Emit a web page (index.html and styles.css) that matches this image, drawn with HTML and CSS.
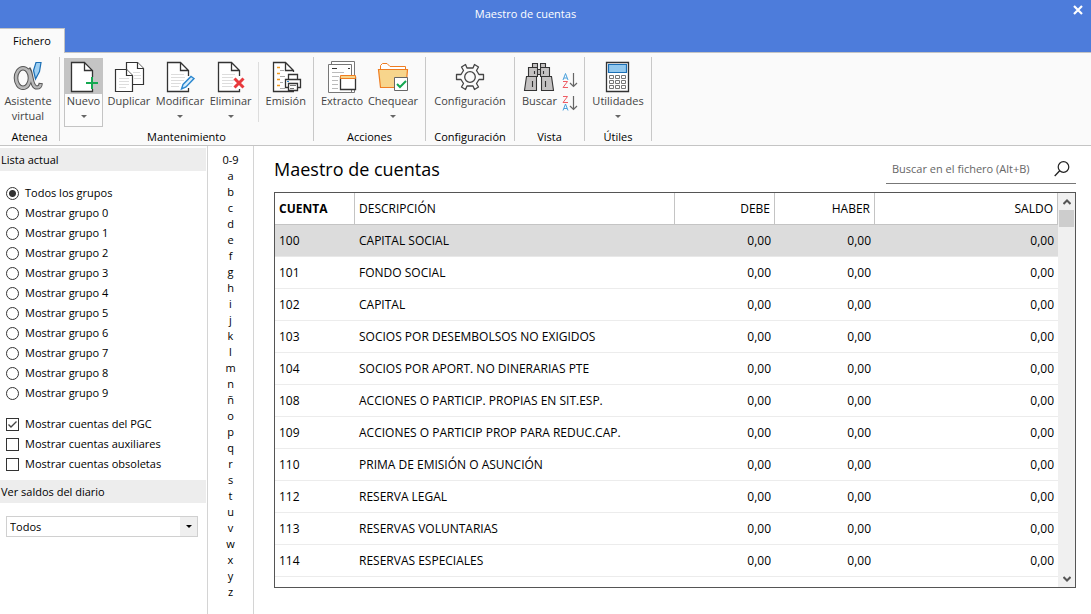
FILE: index.html
```html
<!DOCTYPE html>
<html lang="es">
<head>
<meta charset="utf-8">
<title>Maestro de cuentas</title>
<link rel="stylesheet" href="styles.css">
</head>
<body>
<div class="app">
  <header class="titlebar">
    <span class="window-title">Maestro de cuentas</span>
    <button class="close" type="button" aria-label="Cerrar"><svg width="10" height="10" viewBox="0 0 10 10"><path d="M1 1L9 9M9 1L1 9" stroke="#fff" stroke-width="2.2"/></svg></button>
    <button class="tab" type="button">Fichero</button>
  </header>

  <nav class="ribbon">
    <section class="group g-atenea">
      <div class="tools">
        <button class="tool" type="button">
          <svg class="icon" viewBox="0 0 32 32"><g fill="none" stroke="#555"><ellipse cx="11" cy="17" rx="7" ry="9.800" stroke-width="4.600"/><path d="M16.500 7.500C20.500 12 18.500 26.500 25 26.500C27.500 26.500 28.500 25 28.800 22" stroke-width="4.200"/></g><g fill="none" stroke="#b8b8b8"><ellipse cx="11" cy="17" rx="7" ry="9.800" stroke-width="2.600"/><path d="M16.500 8.500C20.500 12 18.500 26.500 25 26.500C27.500 26.500 28.500 25 28.800 23" stroke-width="2.200"/></g><path d="M24 1.500H29L27.500 10.500L23.500 18L21.500 9.500Z" fill="#9fd0f3" stroke="#1b6fb5" stroke-width="1.200"/></svg>
          <span>Asistente<br>virtual</span>
        </button>
      </div>
      <h2>Atenea</h2>
    </section>

    <section class="group g-mant">
      <div class="tools">
        <button class="tool active" type="button">
          <svg class="icon" viewBox="0 0 32 32"><path d="M3.500 1.500H17.500L24.500 8.500V30.500H3.500Z" fill="#fff"/><path d="M24.500 16V9.500L16.500 1.500H3.500V30.500H24.500V28M16.500 1.500V9.500H24.500" fill="none" stroke="#333" stroke-width="1.300"/><path d="M24 16v12M18 22h12" stroke="#14a850" stroke-width="2"/></svg>
          <span>Nuevo</span><i class="caret"></i>
        </button>
        <button class="tool" type="button">
          <svg class="icon" viewBox="0 0 32 32"><g fill="#fff" stroke="#333" stroke-width="1.200"><path d="M13.500 1.500H24.500L30.500 7.500V23.500H13.500Z"/><path d="M24.500 1.500V7.500H30.500"/><path d="M2.500 8.500H13.500L19.500 14.500V30.500H2.500Z"/><path d="M13.500 8.500V14.500H19.500"/></g><path d="M20 11.500h7M21 14.500h7M21 17.500h7M6 17.500h10M6 20.500h10M6 23.500h10M6 26.500h7" stroke="#ddd"/></svg>
          <span>Duplicar</span>
        </button>
        <button class="tool" type="button">
          <svg class="icon" viewBox="0 0 32 32"><path d="M24.500 15V9.500L16.500 1.500H3.500V30.500H24.500V27M16.500 1.500V9.500H24.500" fill="#fff" stroke="#333" stroke-width="1.300"/><path d="M7 13.500h13M7 16.500h14M7 19.500h13M7 22.500h10M7 25.500h8" stroke="#ddd"/><path d="M17.500 28L19 23.500L27 15.500L30 17.500L22 26Z" fill="#d6ecfb" stroke="#2b87cf" stroke-width="1.400"/></svg>
          <span>Modificar</span><i class="caret"></i>
        </button>
        <button class="tool" type="button">
          <svg class="icon" viewBox="0 0 32 32"><path d="M24.500 15V9.500L16.500 1.500H3.500V30.500H24.500V28M16.500 1.500V9.500H24.500" fill="#fff" stroke="#333" stroke-width="1.300"/><path d="M7 13.500h13M7 16.500h11M7 19.500h12M7 22.500h11M7 25.500h10" stroke="#ddd"/><path d="M19.500 17.500l9 9M28.500 17.500l-9 9" stroke="#e8393c" stroke-width="3"/></svg>
          <span>Eliminar</span><i class="caret"></i>
        </button>
        <span class="divider"></span>
        <button class="tool" type="button">
          <svg class="icon" viewBox="0 0 32 32"><path d="M23.500 11V9.500L15.500 1.500H3.500V30.500H24M15.500 1.500V9.500H23.500" fill="#fff" stroke="#333" stroke-width="1.300"/><path d="M7 6.500h3M7 12.500h3M7 18.500h3M7 24.500h3" stroke="#f39a1e" stroke-width="1.400"/><path d="M10 9.500h4M10 15.500h5M10 21.500h3M10 27.500h5" stroke="#aaa"/><g fill="#fff" stroke="#333" stroke-width="1.300"><path d="M18.500 19V13.500H27.500V19M15.500 26.500V18.500H30.500V26.500Z"/><path d="M18.500 22.500H27.500V29.500H18.500Z"/></g><path d="M20 24.500h6M20 27.500h4" stroke="#777"/><path d="M17 20.500h2" stroke="#2b87cf"/></svg>
          <span>Emisión</span>
        </button>
      </div>
      <h2>Mantenimiento</h2>
    </section>

    <section class="group g-acc">
      <div class="tools">
        <button class="tool" type="button">
          <svg class="icon" viewBox="0 0 32 32"><path d="M5.500 3V.500H28.500V31.500H25M2.500 3.500H25.500V31.500H2.500Z" fill="#fff" stroke="#777"/><path d="M6 7.500h5M22 7.500h2" stroke="#333"/><path d="M6 11.500h12M6 15.500h7M6 19.500h6M6 23.500h6M6 27.500h6" stroke="#bbb"/><path d="M14.500 16.500H29.500V28.500H14.500Z" fill="#fff" stroke="#333" stroke-width="1.300"/><path d="M14.500 14.500H29.500V17.500H14.500Z" fill="#f7d58c" stroke="#ef7d22"/></svg>
          <span>Extracto</span>
        </button>
        <button class="tool" type="button">
          <svg class="icon" viewBox="0 0 32 32"><path d="M3.500 9V4.500L5.500 2.500H10L13 5.500H28.500V9" fill="#fff" stroke="#ef7d22"/><path d="M1.500 8.500H30.500L29 26.500H3.500Z" fill="#f7d58c" stroke="#ef7d22" stroke-width="1.200"/><path d="M17.500 16.500H30.500V29.500H17.500Z" fill="#fff" stroke="#666"/><path d="M20 23l3 3 6-6" fill="none" stroke="#14a850" stroke-width="2"/></svg>
          <span>Chequear</span><i class="caret"></i>
        </button>
      </div>
      <h2>Acciones</h2>
    </section>

    <section class="group g-conf">
      <div class="tools">
        <button class="tool" type="button">
          <svg class="icon" viewBox="0 0 32 32"><g fill="none" stroke="#444" stroke-width="1.300" stroke-linejoin="round"><path d="M13 7L11.500 3.500L7.500 6L9.500 9.500L7 13.500H2.500V18.500H7L9.500 22.500L7.500 26L11.500 28.500L13 25H19L20.500 28.500L24.500 26L22.500 22.500L25 18.500H29.500V13.500H25L22.500 9.500L24.500 6L20.500 3.500L19 7Z"/><circle cx="16" cy="16" r="5.300"/></g></svg>
          <span>Configuración</span>
        </button>
      </div>
      <h2>Configuración</h2>
    </section>

    <section class="group g-vista">
      <div class="tools">
        <button class="tool" type="button">
          <svg class="icon" viewBox="0 0 32 32"><g fill="#c4c2c2" stroke="#333" stroke-width="1.100"><path d="M9.500 2.500H14.500V6.500H9.500ZM17.500 2.500H22.500V6.500H17.500ZM5.500 6.500H14.500V15.500H5.500ZM17.500 6.500H26.500V15.500H17.500ZM14.500 8.500H17.500V13.500H14.500ZM3.500 15.500H13.500V29.500H1.500ZM18.500 15.500H28.500L30.500 29.500H18.500Z"/><path d="M11.500 10v3M20.500 10v3M9.500 20v6M22.500 20v6"/></g></svg>
          <span>Buscar</span>
        </button>
        <div class="sorts">
          <button class="sort" type="button" aria-label="Orden ascendente"><svg width="16" height="18" viewBox="0 0 16 18"><path d="M1 8L3.500 1.500L6 8M2 6H5" fill="none" stroke="#4aa0dc"/><path d="M1 9.500H5.500L1 15.500H6" fill="none" stroke="#ee5b63"/><path d="M11.500 1V14.500M8 11L11.500 14.500L15 11" fill="none" stroke="#666" stroke-width="1.200"/></svg></button>
          <button class="sort" type="button" aria-label="Orden descendente"><svg width="16" height="18" viewBox="0 0 16 18"><path d="M1 1.500H5.500L1 7.500H6" fill="none" stroke="#ee5b63"/><path d="M1 15.500L3.500 9L6 15.500M2 13.500H5" fill="none" stroke="#4aa0dc"/><path d="M11.500 1V14.500M8 11L11.500 14.500L15 11" fill="none" stroke="#666" stroke-width="1.200"/></svg></button>
        </div>
      </div>
      <h2>Vista</h2>
    </section>

    <section class="group g-util">
      <div class="tools">
        <button class="tool" type="button">
          <svg class="icon" viewBox="0 0 32 32"><path d="M4.500 1.500H26.500V30.500H4.500Z" fill="#fff" stroke="#333" stroke-width="1.300"/><path d="M6.500 3.500H24.500V11.500H6.500Z" fill="#92c8ee" stroke="#1b6fb5" stroke-width="1.200"/><path d="M7.500 14.500h4v3h-4zM13.500 14.500h4v3h-4zM19.500 14.500h4v3h-4zM7.500 19.500h4v3h-4zM13.500 19.500h4v3h-4zM19.500 19.500h4v3h-4zM7.500 24.500h4v3h-4zM13.500 24.500h4v3h-4zM19.500 24.500h4v3h-4z" fill="#fff" stroke="#777"/></svg>
          <span>Utilidades</span><i class="caret"></i>
        </button>
      </div>
      <h2>Útiles</h2>
    </section>
  </nav>

  <div class="body">
    <aside class="sidebar">
      <h3>Lista actual</h3>
      <div class="options">
        <label><input type="radio" name="grupo" checked>Todos los grupos</label>
        <label><input type="radio" name="grupo">Mostrar grupo 0</label>
        <label><input type="radio" name="grupo">Mostrar grupo 1</label>
        <label><input type="radio" name="grupo">Mostrar grupo 2</label>
        <label><input type="radio" name="grupo">Mostrar grupo 3</label>
        <label><input type="radio" name="grupo">Mostrar grupo 4</label>
        <label><input type="radio" name="grupo">Mostrar grupo 5</label>
        <label><input type="radio" name="grupo">Mostrar grupo 6</label>
        <label><input type="radio" name="grupo">Mostrar grupo 7</label>
        <label><input type="radio" name="grupo">Mostrar grupo 8</label>
        <label><input type="radio" name="grupo">Mostrar grupo 9</label>
      </div>
      <div class="options checks">
        <label><input type="checkbox" checked>Mostrar cuentas del PGC</label>
        <label><input type="checkbox">Mostrar cuentas auxiliares</label>
        <label><input type="checkbox">Mostrar cuentas obsoletas</label>
      </div>
      <h3 id="saldos">Ver saldos del diario</h3>
      <div class="combo">
        <select aria-labelledby="saldos"><option>Todos</option></select>
        <span class="combo-arrow"></span>
      </div>
    </aside>

    <nav class="letters">
      <a href="#">0-9</a><a href="#">a</a><a href="#">b</a><a href="#">c</a><a href="#">d</a><a href="#">e</a><a href="#">f</a><a href="#">g</a><a href="#">h</a><a href="#">i</a><a href="#">j</a><a href="#">k</a><a href="#">l</a><a href="#">m</a><a href="#">n</a><a href="#">ñ</a><a href="#">o</a><a href="#">p</a><a href="#">q</a><a href="#">r</a><a href="#">s</a><a href="#">t</a><a href="#">u</a><a href="#">v</a><a href="#">w</a><a href="#">x</a><a href="#">y</a><a href="#">z</a>
    </nav>

    <main class="main">
      <div class="main-head">
        <h1>Maestro de cuentas</h1>
        <div class="search">
          <input type="text" placeholder="Buscar en el fichero (Alt+B)" aria-label="Buscar en el fichero">
          <button type="button" aria-label="Buscar"><svg width="16" height="16" viewBox="0 0 16 16"><circle cx="9.500" cy="6" r="5.300" fill="none" stroke="#222" stroke-width="1.200"/><path d="M5.700 9.800L.7 15" stroke="#222" stroke-width="1.300"/></svg></button>
        </div>
      </div>
      <div class="grid">
        <div class="grid-view">
          <table>
            <colgroup><col class="c-cuenta"><col class="c-desc"><col class="c-num"><col class="c-num"><col></colgroup>
            <thead><tr><th class="sorted">CUENTA</th><th>DESCRIPCIÓN</th><th class="num">DEBE</th><th class="num">HABER</th><th class="num">SALDO</th></tr></thead>
            <tbody>
              <tr class="selected"><td>100</td><td>CAPITAL SOCIAL</td><td class="num">0,00</td><td class="num">0,00</td><td class="num">0,00</td></tr>
              <tr><td>101</td><td>FONDO SOCIAL</td><td class="num">0,00</td><td class="num">0,00</td><td class="num">0,00</td></tr>
              <tr><td>102</td><td>CAPITAL</td><td class="num">0,00</td><td class="num">0,00</td><td class="num">0,00</td></tr>
              <tr><td>103</td><td>SOCIOS POR DESEMBOLSOS NO EXIGIDOS</td><td class="num">0,00</td><td class="num">0,00</td><td class="num">0,00</td></tr>
              <tr><td>104</td><td>SOCIOS POR APORT. NO DINERARIAS PTE</td><td class="num">0,00</td><td class="num">0,00</td><td class="num">0,00</td></tr>
              <tr><td>108</td><td>ACCIONES O PARTICIP. PROPIAS EN SIT.ESP.</td><td class="num">0,00</td><td class="num">0,00</td><td class="num">0,00</td></tr>
              <tr><td>109</td><td>ACCIONES O PARTICIP PROP PARA REDUC.CAP.</td><td class="num">0,00</td><td class="num">0,00</td><td class="num">0,00</td></tr>
              <tr><td>110</td><td>PRIMA DE EMISIÓN O ASUNCIÓN</td><td class="num">0,00</td><td class="num">0,00</td><td class="num">0,00</td></tr>
              <tr><td>112</td><td>RESERVA LEGAL</td><td class="num">0,00</td><td class="num">0,00</td><td class="num">0,00</td></tr>
              <tr><td>113</td><td>RESERVAS VOLUNTARIAS</td><td class="num">0,00</td><td class="num">0,00</td><td class="num">0,00</td></tr>
              <tr><td>114</td><td>RESERVAS ESPECIALES</td><td class="num">0,00</td><td class="num">0,00</td><td class="num">0,00</td></tr>
            </tbody>
          </table>
        </div>
        <div class="scrollbar">
          <button type="button" aria-label="Subir"><svg width="8" height="6" viewBox="0 0 8 6"><path d="M.5 5L4 1.500L7.500 5" fill="none" stroke="#555" stroke-width="2"/></svg></button>
          <div class="thumb"></div>
          <button class="down" type="button" aria-label="Bajar"><svg width="8" height="6" viewBox="0 0 8 6"><path d="M.5 1L4 4.500L7.500 1" fill="none" stroke="#555" stroke-width="2"/></svg></button>
        </div>
      </div>
    </main>
  </div>
</div>
</body>
</html>
```
FILE: styles.css
```css
* { box-sizing: border-box; }
body { margin: 0; font: 11px/16px "Open Sans", "Noto Sans", sans-serif; color: #000; background: #fff; }
button { font: inherit; color: inherit; background: none; border: 0; padding: 0; margin: 0; }
h1, h2, h3 { margin: 0; font-weight: 400; }
.app { height: 100vh; display: flex; flex-direction: column; overflow: hidden; }

.titlebar { height: 53px; flex: none; background: #4d7cdb; color: #fff; display: grid; grid-template-columns: 1fr auto; grid-template-rows: 28px 25px; border-bottom: 1px solid #c4c4c4; }
.window-title { text-align: center; line-height: 28px; padding-right: 14px; }
.close { width: 26px; height: 20px; display: grid; place-items: center; }
.tab { width: 65px; height: 25px; justify-self: start; background: #fafafa; color: #000; border: 1px solid #c4c4c4; border-width: 1px 1px 0 0; }

.ribbon { flex: none; height: 93px; display: flex; background: #fafafa; border-bottom: 1px solid #c4c4c4; padding: 4px 0; }
.group { display: flex; flex-direction: column; border-right: 1px solid #c8c8c8; }
.group h2 { font-size: 11px; line-height: 16px; text-align: center; white-space: nowrap; margin-top: 2px; }
.tools { display: flex; justify-content: center; align-items: flex-start; padding-top: 1px; }
.tool { display: flex; flex-direction: column; align-items: center; color: #444; line-height: 15px; white-space: nowrap; padding: 3px 0 0; border: 1px solid transparent; border-top: 0; height: 69px; }
.icon { width: 32px; height: 32px; flex: none; }
.active { width: 39px; border-color: #c4c4c4; background: linear-gradient(#c4c4c4 36px, #fcfcfc 36px); }
.caret { margin-top: 7px; border: 3px solid transparent; border-top-color: #666; border-bottom: 0; }
.g-atenea { width: 60px; }
.g-atenea .tool { margin-right: 3px; }
.g-mant { width: 254px; }
.g-mant .tools { justify-content: space-between; padding-left: 4px; padding-right: 6px; }
.divider { width: 1px; height: 60px; background: #ddd; margin: 4px 2px 0; }
.g-acc { width: 112px; }
.g-acc .tools { justify-content: space-between; padding-left: 6px; padding-right: 6px; }
.g-conf { width: 89px; }
.g-vista { width: 70px; }
.sorts { display: flex; flex-direction: column; gap: 5px; padding: 14px 0 0 4px; }
.sort { height: 18px; }
.sort svg { display: block; }
.g-util { width: 67px; }

.body { flex: 1; min-height: 0; display: flex; }
.sidebar { width: 208px; flex: none; padding: 2px 1px 0 0; border-right: 1px solid #d4d4d4; }
.sidebar h3 { background: #ededed; font-size: 11px; line-height: 23px; padding-left: 1px; }
.options { padding: 12px 0 0 6px; }
.options label { display: flex; align-items: center; gap: 6px; height: 20px; }
.options input { appearance: none; width: 13px; height: 13px; margin: 0; border: 1px solid #333; background: #fff; }
.options input[type="radio"] { border-radius: 50%; }
.options input[type="radio"]:checked { background: radial-gradient(circle, #333 3px, #fff 4px); }
.options input[type="checkbox"]:checked { background: url("data:image/svg+xml,%3Csvg xmlns='http://www.w3.org/2000/svg' viewBox='0 0 11 11'%3E%3Cpath d='M1.500 5.500L4 8L9.500 2.500' fill='none' stroke='%23444' stroke-width='1.400'/%3E%3C/svg%3E"); }
.checks { padding-top: 11px; padding-bottom: 6px; }
.combo { margin: 13px 8px 0 6px; height: 21px; display: grid; grid-template-columns: 1fr 17px; border: 1px solid #d0d0d0; }
.combo select { grid-area: 1 / 1 / 2 / 3; appearance: none; border: 0; background: #fff; font: inherit; color: inherit; padding: 0 3px; }
.combo-arrow { grid-area: 1 / 2; background: #efefef; display: grid; place-items: center; pointer-events: none; }
.combo-arrow::before { content: ""; border: 3px solid transparent; border-top-color: #000; border-bottom: 0; }

.letters { width: 46px; flex: none; display: flex; flex-direction: column; padding-top: 6px; border-right: 1px solid #d4d4d4; text-align: center; }
.letters a { color: inherit; text-decoration: none; height: 16px; }

.main { flex: 1; min-width: 0; display: flex; flex-direction: column; padding: 0 15px 26px 20px; }
.main-head { display: flex; justify-content: space-between; height: 46px; flex: none; }
h1 { font-size: 18px; line-height: 46px; }
.search { width: 190px; height: 29px; margin-top: 9px; display: flex; align-items: center; border-bottom: 1px solid #777; }
.search input { flex: 1; min-width: 0; border: 0; outline: 0; background: none; font: inherit; padding: 0 6px; }
.search input::placeholder { color: #666; opacity: 1; }
.search button { width: 28px; height: 18px; display: grid; place-items: center; }
.grid { flex: 1; min-height: 0; display: flex; border: 1px solid #555; }
.grid-view { flex: 1; min-width: 0; overflow: hidden; }
table { width: 100%; table-layout: fixed; border-collapse: separate; border-spacing: 0; font-size: 12px; }
.c-cuenta { width: 80px; }
.c-desc { width: 320px; }
.c-num { width: 100px; }
th, td { height: 32px; padding: 0 4px; text-align: left; font-weight: 400; white-space: nowrap; border-bottom: 1px solid #ececec; }
th { border-right: 1px solid #c4c4c4; border-bottom-color: #c4c4c4; }
.sorted { font-weight: 700; }
th.num, td.num { text-align: right; }
.selected td { background: #dcdcdc; border-bottom-color: #e8e8e8; }
.scrollbar { width: 17px; flex: none; display: flex; flex-direction: column; background: #f0f0f0; padding: 0 1px; }
.scrollbar button { height: 17px; display: grid; place-items: center; }
.thumb { height: 17px; background: #cdcdcd; }
.scrollbar .down { margin-top: auto; }
```
